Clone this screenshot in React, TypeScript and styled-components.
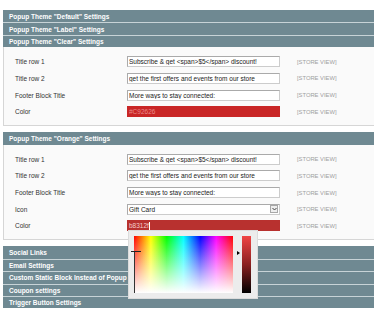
import React from 'react';
import styled, { createGlobalStyle } from 'styled-components';

const GlobalStyle = createGlobalStyle`
  html, body {
    margin: 0;
    padding: 0;
    background: #ffffff;
    overflow: hidden;
  }
  body {
    font-family: 'Liberation Sans', Arial, sans-serif;
    color: #2f2f2f;
  }
`;

const Page = styled.div`
  padding: 10px 0 0 3px;
  margin-right: -12px;
`;

const HeadStack = styled.div`
  display: flex;
  flex-direction: column;
`;

const SectionHead = styled.div<{ $first?: boolean }>`
  box-sizing: border-box;
  height: 12.4px;
  display: flex;
  align-items: center;
  padding-left: 6px;
  background: #6f8992;
  border-top: ${({ $first }) => ($first ? 'none' : '1px solid #c7d3d7')};
  color: #ffffff;
  font-size: 6.5px;
  font-weight: bold;
  white-space: nowrap;
`;

const Fieldset = styled.div`
  background: #fafafa;
  border: 1px solid #d6d6d6;
  border-top: none;
  padding: 9px 0 8px 11px;
  margin-bottom: 6px;
`;

const FormGrid = styled.div`
  display: grid;
  grid-template-columns: 112px 153px auto;
  row-gap: 5.7px;
  align-items: center;
`;

const Label = styled.div`
  font-size: 6.5px;
  color: #333333;
  white-space: nowrap;
`;

const Field = styled.div<{ $bg?: string; $fg?: string }>`
  position: relative;
  box-sizing: border-box;
  height: 11px;
  display: flex;
  align-items: center;
  padding: 0 2px 0 1px;
  background: ${({ $bg }) => $bg || '#ffffff'};
  border: 1px solid ${({ $bg }) => $bg || '#c4c4c4'};
  border-color: ${({ $bg }) => ($bg ? $bg : '#aaaaaa #cccccc #cccccc #aaaaaa')};
  color: ${({ $fg }) => $fg || '#222222'};
  font-size: 6.5px;
  white-space: nowrap;
  overflow: visible;
`;

const FieldText = styled.span`
  flex: 1;
  overflow: hidden;
`;

const Caret = styled.span`
  display: inline-block;
  width: 1px;
  height: 8px;
  margin-left: 0.5px;
  vertical-align: middle;
  background: #ffffff;
`;

const ArrowBox = styled.span`
  box-sizing: border-box;
  width: 8px;
  height: 8px;
  margin-right: -1px;
  display: flex;
  align-items: center;
  justify-content: center;
  background: #eeeeee;
  border: 1px solid #a8a8a8;
`;

const Scope = styled.div`
  padding-left: 17px;
  font-size: 5.8px;
  color: #a0a0a0;
  white-space: nowrap;
`;

const Picker = styled.div`
  position: absolute;
  top: 100%;
  left: 0;
  z-index: 10;
  box-sizing: border-box;
  width: 130px;
  height: 69px;
  display: flex;
  gap: 9px;
  padding: 5px 6px 0 5px;
  background: #ececec;
  border: 1px solid #dcdcdc;
`;

const HueSquare = styled.div`
  position: relative;
  width: 100px;
  height: 57px;
  background:
    linear-gradient(to bottom, rgba(255, 255, 255, 0) 0%, #ffffff 100%),
    linear-gradient(
      to right,
      #ff0000 0%,
      #ffff00 17%,
      #00ff00 33%,
      #00ffff 50%,
      #0000ff 67%,
      #ff00ff 83%,
      #ff0000 100%
    );
`;

const CrossH = styled.span`
  position: absolute;
  top: 15px;
  left: -3px;
  width: 10px;
  height: 1px;
  background: #222222;
`;

const CrossV = styled.span`
  position: absolute;
  top: 15px;
  left: 0;
  width: 1px;
  bottom: 0;
  background: #333333;
`;

const ValueBar = styled.div`
  position: relative;
  width: 9px;
  height: 57px;
  background: linear-gradient(to bottom, #f04444 0%, #8a2020 50%, #000000 100%);
`;

const BarPointer = styled.span`
  position: absolute;
  top: 15px;
  left: -5px;
  width: 0;
  height: 0;
  border-left: 3px solid #000000;
  border-top: 2px solid transparent;
  border-bottom: 2px solid transparent;
`;

type Row = {
  label: string;
  value: string;
  kind?: 'text' | 'select' | 'color';
  bg?: string;
  fg?: string;
  caret?: boolean;
  picker?: boolean;
};

const clearRows: Row[] = [
  { label: 'Title row 1', value: 'Subscribe & get <span>$5</span> discount!' },
  { label: 'Title row 2', value: 'get the first offers and events from our store' },
  { label: 'Footer Block Title', value: 'More ways to stay connected:' },
  { label: 'Color', value: '#C92626', kind: 'color', bg: '#c92626', fg: '#e98a8a' },
];

const orangeRows: Row[] = [
  { label: 'Title row 1', value: 'Subscribe & get <span>$5</span> discount!' },
  { label: 'Title row 2', value: 'get the first offers and events from our store' },
  { label: 'Footer Block Title', value: 'More ways to stay connected:' },
  { label: 'Icon', value: 'Gift Card', kind: 'select' },
  {
    label: 'Color',
    value: 'b8312f',
    kind: 'color',
    bg: '#b8312f',
    fg: '#f2cccc',
    caret: true,
    picker: true,
  },
];

const Chevron = () => (
  <svg width="5" height="4" viewBox="0 0 5 4">
    <path d="M0.5 1 L2.5 3 L4.5 1" fill="none" stroke="#444" strokeWidth="1" />
  </svg>
);

const ColorPicker = () => (
  <Picker>
    <HueSquare>
      <CrossV />
      <CrossH />
    </HueSquare>
    <ValueBar>
      <BarPointer />
    </ValueBar>
  </Picker>
);

const FormRows = ({ rows }: { rows: Row[] }) => (
  <FormGrid>
    {rows.map((row, i) => (
      <React.Fragment key={i}>
        <Label>{row.label}</Label>
        <Field $bg={row.bg} $fg={row.fg}>
          <FieldText>
            {row.value}
            {row.caret && <Caret />}
          </FieldText>
          {row.kind === 'select' && (
            <ArrowBox>
              <Chevron />
            </ArrowBox>
          )}
          {row.picker && <ColorPicker />}
        </Field>
        <Scope>[STORE VIEW]</Scope>
      </React.Fragment>
    ))}
  </FormGrid>
);

export default function App() {
  return (
    <>
      <GlobalStyle />
      <Page>
        <HeadStack>
          <SectionHead $first>Popup Theme "Default" Settings</SectionHead>
          <SectionHead>Popup Theme "Label" Settings</SectionHead>
          <SectionHead>Popup Theme "Clear" Settings</SectionHead>
        </HeadStack>
        <Fieldset>
          <FormRows rows={clearRows} />
        </Fieldset>

        <SectionHead $first>Popup Theme "Orange" Settings</SectionHead>
        <Fieldset>
          <FormRows rows={orangeRows} />
        </Fieldset>

        <HeadStack>
          <SectionHead $first>Social Links</SectionHead>
          <SectionHead>Email Settings</SectionHead>
          <SectionHead>Custom Static Block Instead of Popup</SectionHead>
          <SectionHead>Coupon settings</SectionHead>
          <SectionHead>Trigger Button Settings</SectionHead>
        </HeadStack>
      </Page>
    </>
  );
}
